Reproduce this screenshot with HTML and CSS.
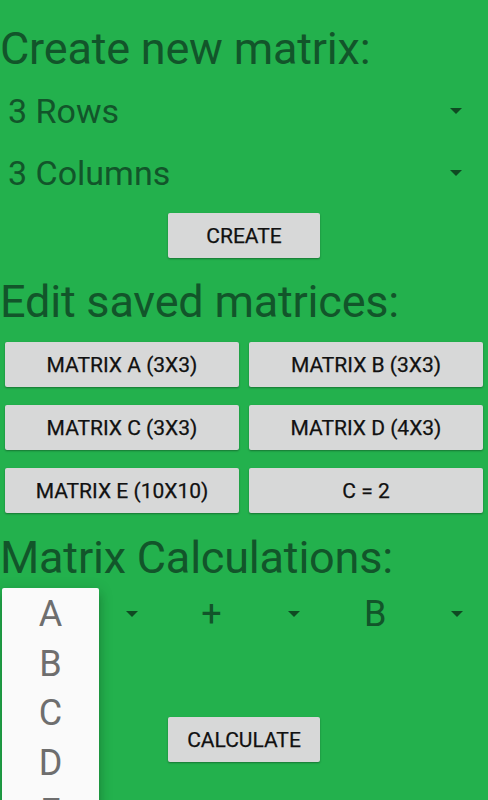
FILE: index.html
```html
<!DOCTYPE html>
<html>
<head>
<meta charset="utf-8">
<link rel="stylesheet" href="styles.css">
</head>
<body>
<main class="screen">
  <h1 class="heading heading-first">Create new matrix:</h1>
  <div class="spinner">
    <span class="spinner-text">3 Rows</span>
    <svg class="caret" width="12" height="6" viewBox="0 0 12 6"><path d="M0 0H12L6 6Z"/></svg>
  </div>
  <div class="spinner">
    <span class="spinner-text">3 Columns</span>
    <svg class="caret" width="12" height="6" viewBox="0 0 12 6"><path d="M0 0H12L6 6Z"/></svg>
  </div>
  <div class="center">
    <button class="btn btn-small btn-create">CREATE</button>
  </div>

  <h2 class="heading heading-edit">Edit saved matrices:</h2>
  <div class="grid">
    <button class="btn">MATRIX A (3X3)</button>
    <button class="btn">MATRIX B (3X3)</button>
    <button class="btn">MATRIX C (3X3)</button>
    <button class="btn">MATRIX D (4X3)</button>
    <button class="btn">MATRIX E (10X10)</button>
    <button class="btn">C = 2</button>
  </div>

  <h2 class="heading heading-calc">Matrix Calculations:</h2>
  <div class="calc-row">
    <div class="calc-spinner">
      <span class="calc-text">A</span>
      <svg class="caret" width="12" height="6" viewBox="0 0 12 6"><path d="M0 0H12L6 6Z"/></svg>
    </div>
    <div class="calc-spinner">
      <span class="calc-text op">+</span>
      <svg class="caret" width="12" height="6" viewBox="0 0 12 6"><path d="M0 0H12L6 6Z"/></svg>
    </div>
    <div class="calc-spinner">
      <span class="calc-text last">B</span>
      <svg class="caret" width="12" height="6" viewBox="0 0 12 6"><path d="M0 0H12L6 6Z"/></svg>
    </div>
    <ul class="popup">
      <li>A</li>
      <li>B</li>
      <li>C</li>
      <li>D</li>
      <li>E</li>
    </ul>
  </div>
  <div class="center">
    <button class="btn btn-small btn-calc">CALCULATE</button>
  </div>
</main>
</body>
</html>
```

FILE: styles.css
```css
html, body {
  margin: 0;
  padding: 0;
  height: 800px;
  overflow: hidden;
  background: #23b14d;
}
.screen {
  font-family: Roboto, "Noto Sans", sans-serif;
  color: #12552a;
  display: flex;
  flex-direction: column;
}
.heading {
  margin: 0;
  font-weight: 400;
  font-size: 45px;
  line-height: 52px;
  height: 52px;
  white-space: nowrap;
  letter-spacing: -0.2px;
}
.heading-first { margin-top: 23px; }
.heading-edit { margin-top: 18px; }
.heading-calc { margin-top: 19px; }

.spinner {
  height: 62px;
  display: flex;
  align-items: center;
  justify-content: space-between;
  padding: 0 26px 0 8px;
}
.spinner:first-of-type { margin-top: 5px; }
.spinner-text {
  font-size: 34px;
  line-height: 62px;
}
.caret {
  display: block;
  fill: #0f4a22;
}

.center {
  display: flex;
  justify-content: center;
}
.btn {
  font-family: Roboto, "Noto Sans", sans-serif;
  font-weight: 400;
  font-size: 21px;
  color: #111;
  background: #d7d8d8;
  border: none;
  border-radius: 2px;
  height: 45px;
  padding: 0;
  box-shadow: 0 1px 2px rgba(0, 0, 0, 0.35);
  letter-spacing: 0;
  -webkit-text-stroke: 0.25px #111;
}
.btn-small { width: 152px; }
.btn-create { margin-top: 9px; }
.btn-calc { margin-top: 78px; }

.grid {
  margin-top: 14px;
  padding: 0 5px;
  display: grid;
  grid-template-columns: 1fr 1fr;
  column-gap: 10px;
  row-gap: 18px;
}

.calc-row {
  position: relative;
  margin-top: 5px;
  display: grid;
  grid-template-columns: repeat(3, 1fr);
  height: 50px;
}
.calc-spinner {
  display: flex;
  align-items: center;
  padding-right: 25px;
}
.calc-text {
  flex: 1;
  text-align: center;
  font-size: 36px;
  line-height: 50px;
  padding-right: 16px;
}
.calc-text.op { padding-right: 28px; }
.calc-text.last { padding-right: 26px; }

.popup {
  position: absolute;
  left: 2px;
  top: -1px;
  width: 97px;
  height: 230px;
  margin: 0;
  padding: 2px 0 0;
  list-style: none;
  background: #fafafa;
  border-radius: 2px;
  box-shadow: 0 8px 10px 1px rgba(0, 0, 0, 0.14), 0 3px 14px 2px rgba(0, 0, 0, 0.12), 0 5px 5px -3px rgba(0, 0, 0, 0.2);
  overflow: hidden;
}
.popup li {
  font-size: 36px;
  line-height: 49.5px;
  text-align: center;
  color: #6e6e6e;
}
```
